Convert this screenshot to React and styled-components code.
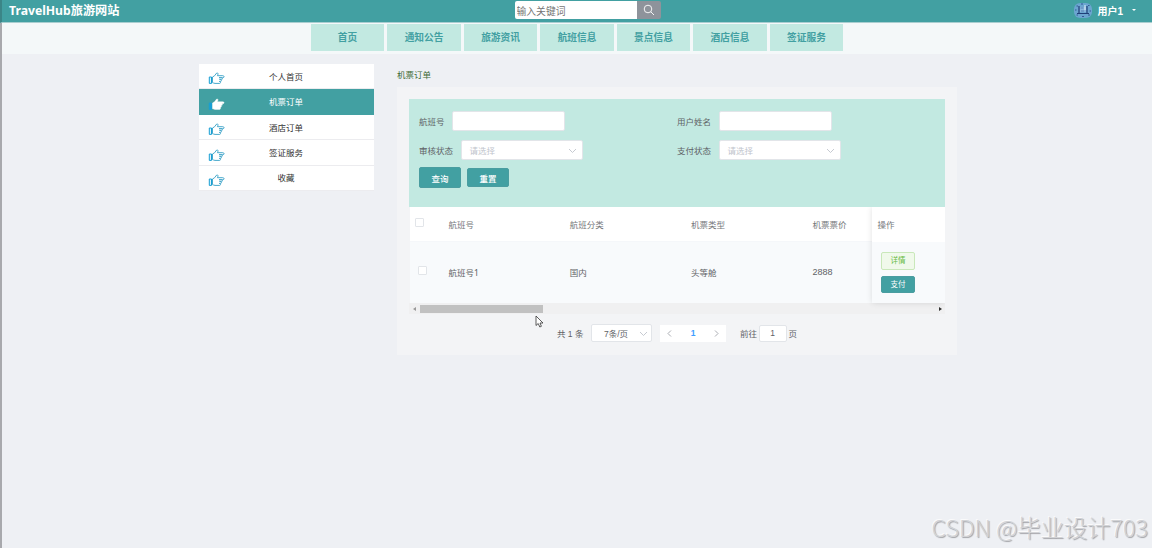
import React from 'react';
import styled, { createGlobalStyle } from 'styled-components';

const colors = {
  teal: '#42a0a2',
  mint: '#c2e9e1',
  page: '#eef0f4',
  text: '#606266',
  border: '#e2e5e9',
  placeholder: '#c0c4cc',
};

const GlobalStyle = createGlobalStyle`
  * {
    box-sizing: border-box;
  }

  body {
    margin: 0;
    height: 548px;
    overflow: hidden;
    background: ${colors.page};
    font-family: 'Noto Sans', 'Noto Sans CJK SC', sans-serif;
    font-size: 8.5px;
    color: ${colors.text};
  }

  button,
  input {
    font-family: inherit;
  }
`;

const Page = styled.div`
  height: 548px;
  border-left: 2px solid #a8a9ad;
`;

const Header = styled.header`
  display: flex;
  height: 23px;
  margin-left: -2px;
  padding-left: 9px;
  background: ${colors.teal};
  border-left: 2px solid #3b8587;
  border-bottom: 1px solid #a9ced0;
  color: #fff;
  font-weight: bold;
`;

const Brand = styled.div`
  width: 505.5px;
  margin-left: -2px;
  font-size: 12.2px;
  line-height: 22px;
`;

const Search = styled.form`
  display: flex;
  width: 146px;
  height: 18px;
  margin-top: 1px;
  overflow: hidden;
  border-radius: 2px;
`;

const SearchInput = styled.input`
  width: 122px;
  padding: 2px 2px 0;
  border: 0;
  background: #fff;
  font-size: 9.8px;

  &::placeholder {
    color: #757575;
  }
`;

const SearchButton = styled.button`
  width: 24px;
  padding: 0;
  border: 0;
  background: #8e939b;
  line-height: 0;
`;

const Account = styled.div`
  display: flex;
  align-items: center;
  gap: 5px;
  height: 20px;
  margin-left: auto;
  padding-right: 16px;
  font-family: 'Liberation Sans', 'Noto Sans CJK SC', sans-serif;
  font-size: 10px;
`;

const Caret = styled.i`
  margin-left: 4px;
  border: 2.5px solid transparent;
  border-top-color: #fff;
  border-bottom: 0;
`;

const Nav = styled.nav`
  display: flex;
  justify-content: center;
  gap: 3.4px;
  height: 31px;
  padding: 1px 0 3px;
  background: #f4f8f9;
`;

const NavItem = styled.a`
  width: 73.1px;
  background: ${colors.mint};
  color: ${colors.teal};
  font-size: 9.7px;
  font-weight: bold;
  line-height: 28px;
  text-align: center;
`;

const Main = styled.main`
  display: flex;
  gap: 23px;
  padding: 10px 0 0 197px;
`;

const Sidebar = styled.aside`
  width: 175px;
`;

const MenuItem = styled.a`
  display: flex;
  align-items: center;
  height: 25.45px;
  padding: 0 9px;
  background: ${({ $active }) => ($active ? colors.teal : '#fff')};
  border-bottom: 1px solid ${({ $active }) => ($active ? colors.teal : '#ececef')};
  color: ${({ $active }) => ($active ? '#fff' : '#333')};

  svg {
    margin-top: 5px;
  }

  span {
    flex: 1;
    padding: 0 18px 1px 0;
    text-align: center;
  }
`;

const Content = styled.section`
  width: 560px;
`;

const Title = styled.h1`
  height: 23px;
  margin: 0;
  color: #3c6a35;
  font-size: 8.5px;
  font-weight: normal;
  line-height: 22px;
`;

const Panel = styled.div`
  height: 268px;
  padding: 12px 12px 0;
  background: #f3f4f6;
`;

const Filters = styled.div`
  display: grid;
  grid-template-columns: 258px 1fr;
  grid-template-rows: 20px 20px 21px;
  row-gap: 9px;
  height: 108px;
  padding: 12px 10px;
  background: ${colors.mint};
`;

const Field = styled.label`
  display: flex;
  align-items: center;
  gap: 7.5px;
`;

const FieldName = styled.span`
  padding-bottom: 1px;
`;

const TextInput = styled.input`
  width: 113px;
  height: 20px;
  border: 1px solid ${colors.border};
  border-radius: 2px;
  background: #fff;
`;

const Select = styled.div`
  display: flex;
  align-items: center;
  justify-content: space-between;
  width: 122px;
  height: 20px;
  padding: 0 5px 0 8px;
  border: 1px solid ${colors.border};
  border-radius: 2px;
  background: #fff;
  color: ${colors.placeholder};
`;

const Actions = styled.div`
  display: flex;
  align-items: center;
  gap: 6px;
  margin-top: -4px;
`;

const Button = styled.button`
  width: 42px;
  height: ${({ $large }) => ($large ? '21px' : '19px')};
  padding: 0;
  border: 1px solid #4a9da0;
  border-radius: 2px;
  background: ${colors.teal};
  color: #fff;
  font-size: 8.5px;
  font-weight: 500;
`;

const Table = styled.div`
  display: flex;
  height: 96px;
  padding-left: 0.5px;
`;

const Columns = styled.div`
  width: 462px;
`;

const Row = styled.div`
  display: grid;
  grid-template-columns: 39px 121.3px 121.3px 121.3px 1fr;
  align-items: center;
  height: ${({ $head }) => ($head ? '34.5px' : '61.5px')};
  background: ${({ $head }) => ($head ? '#fff' : '#f8fafc')};
  border-bottom: ${({ $head }) => ($head ? '1px solid #f5f7fa' : '0')};
  color: ${({ $head }) => ($head ? '#75777b' : colors.text)};
`;

const Price = styled.span`
  font-family: 'Liberation Sans', sans-serif;
  font-size: 9px;
`;

const Checkbox = styled.i`
  width: 9px;
  height: 9px;
  margin: ${({ $head }) => ($head ? '-3px 0 0 5.5px' : '-4px 0 0 8.5px')};
  border: 1px solid ${colors.border};
  border-radius: 1px;
  background: #fff;
`;

const FixedColumn = styled.div`
  width: 73.5px;
  background: #f8fafc;
  box-shadow: 0 0 6px rgba(0, 0, 0, 0.12);
  clip-path: inset(0 0 -6px -8px);
  z-index: 1;
`;

const FixedHead = styled.div`
  height: 34.5px;
  padding: 1px 0 0 6px;
  background: #fff;
  color: #75777b;
  line-height: 34px;
`;

const FixedCell = styled.div`
  display: flex;
  flex-direction: column;
  gap: 6px;
  padding: 10.5px 0 0 9.5px;
`;

const SmallButton = styled.button`
  width: 34px;
  height: ${({ $success }) => ($success ? '18px' : '17px')};
  padding: 0;
  border: 1px solid ${({ $success }) => ($success ? '#c9e8ba' : '#4a9da0')};
  border-radius: 2px;
  background: ${({ $success }) => ($success ? '#f0f9eb' : colors.teal)};
  color: ${({ $success }) => ($success ? '#67b93f' : '#fff')};
  font-size: 7.5px;
  line-height: 1;
`;

const Scrollbar = styled.div`
  display: flex;
  align-items: center;
  height: 11px;
  padding: 0 3px 0 4px;
  background: #f0f0f1;
`;

const Arrow = styled.i`
  border: 2px solid transparent;
  border-width: 2px ${({ $right }) => ($right ? '0 2px 3px' : '3px 2px 0')};
  border-${({ $right }) => ($right ? 'left' : 'right')}-color: ${({ $right }) => ($right ? '#333' : '#999')};
`;

const Thumb = styled.div`
  width: 123px;
  height: 8px;
  margin: 0 auto 0 4px;
  background: #c1c1c1;
`;

const Pagination = styled.div`
  display: flex;
  align-items: center;
  height: 18px;
  margin-top: 10px;
  padding-left: 148px;
  font-family: 'Liberation Sans', 'Noto Sans CJK SC', sans-serif;
`;

const PageSize = styled.div`
  display: flex;
  align-items: center;
  justify-content: space-between;
  width: 61px;
  height: 18px;
  margin: 0 8px;
  padding: 0 3px 0 12px;
  border: 1px solid ${colors.border};
  border-radius: 2px;
  background: #fff;
`;

const Total = styled.span`
  width: 26px;
  white-space: nowrap;
`;

const Pager = styled.div`
  display: flex;
  align-items: center;
  justify-content: space-between;
  width: 66px;
  height: 17px;
  margin-right: 14px;
  padding: 0 5px;
  background: #fff;
  color: #409eff;
  font-weight: bold;
`;

const PageInput = styled.input`
  width: 28px;
  height: 17px;
  margin: 0 2px 0 1.5px;
  padding: 0;
  border: 1px solid ${colors.border};
  border-radius: 2px;
  color: ${colors.text};
  font-size: 8.5px;
  text-align: center;
`;

const Cursor = styled.svg`
  position: absolute;
  left: 535px;
  top: 315px;
`;

const Watermark = styled.div`
  position: absolute;
  right: 4px;
  bottom: 4px;
  color: #d2d3d6;
  font-family: 'Noto Sans CJK SC', sans-serif;
  font-size: 23.3px;
  font-weight: 300;
  line-height: 34px;
  text-shadow: 1px 1px 1px #a0a1a5, -1px -1px 0 #fafafb;
  white-space: nowrap;
`;

const Chevron = ({ d = 'M1 3l3.5 3.5L8 3', color = '#c0c4cc' }) => (
  <svg width="9" height="9" viewBox="0 0 9 9" fill="none" stroke={color} strokeWidth="0.9">
    <path d={d} />
  </svg>
);

const Hand = ({ active }) => (
  <svg width="17" height="13" viewBox="0 0 17 13" fill={active ? '#fff' : 'none'} stroke={active ? '#fff' : '#48a9cc'} strokeWidth={active ? 0.4 : 1}>
    <path d="M4.5 5l2-1.2L8.7 1c1.3-.5 1.7.9.7 2.7h5.4c1.7 0 1.7 2 0 2H11h2.6c1 0 1 1.9 0 1.9h-2.1 1.1c1 0 1 1.9 0 1.9h-1.3.6c.9 0 .8 1.9-.2 1.9H7c-1.2 0-1.6-.7-2.5-.7z" />
    <path d="M1.3 5h2.2v6.4H1.3z" fill={active ? '#189fd4' : '#dff2f8'} stroke="#189fd4" strokeWidth="1" />
  </svg>
);

const Avatar = () => (
  <svg width="18" height="15" viewBox="0 0 18 15">
    <rect width="18" height="15" rx="6" fill="#6ba5d0" />
    <path d="M2.5 3h1.5M14 2.5h1.5M1 7h1.5M15.5 8H17M2.5 12H4M7 1h2M14 12h2M8 13.5h2" stroke="#345b94" strokeWidth="1.2" />
    <path d="M5 3v7M13 3v7M3 10.5h12" fill="none" stroke="#203f78" strokeWidth="1.2" />
    <path d="M6 4h6v5H6z" fill="#88b5dc" />
    <path d="M6.5 5h3M7 8h3" stroke="#4674a9" strokeWidth="0.8" />
    <path d="M11 2v5" stroke="#e4f4fb" />
  </svg>
);

const navItems = ['首页', '通知公告', '旅游资讯', '航班信息', '景点信息', '酒店信息', '签证服务'];
const menuItems = ['个人首页', '机票订单', '酒店订单', '签证服务', '收藏'];

const App = () => {
  return (
    <Page>
      <GlobalStyle />
      <Header>
        <Brand>TravelHub旅游网站</Brand>
        <Search>
          <SearchInput placeholder="输入关键词" />
          <SearchButton type="button">
            <svg width="12" height="12" viewBox="0 0 12 12" fill="none" stroke="#fff" strokeWidth="0.9">
              <circle cx="5" cy="5" r="3.8" />
              <path d="M7.8 7.8L11 11" />
            </svg>
          </SearchButton>
        </Search>
        <Account>
          <Avatar />
          <span>用户1</span>
          <Caret />
        </Account>
      </Header>
      <Nav>
        {navItems.map((item) => (
          <NavItem key={item}>{item}</NavItem>
        ))}
      </Nav>
      <Main>
        <Sidebar>
          {menuItems.map((item) => (
            <MenuItem key={item} $active={item === '机票订单'}>
              <Hand active={item === '机票订单'} />
              <span>{item}</span>
            </MenuItem>
          ))}
        </Sidebar>
        <Content>
          <Title>机票订单</Title>
          <Panel>
            <Filters>
              <Field>
                <FieldName>航班号</FieldName>
                <TextInput />
              </Field>
              <Field>
                <FieldName>用户姓名</FieldName>
                <TextInput />
              </Field>
              <Field>
                <FieldName>审核状态</FieldName>
                <Select>请选择<Chevron /></Select>
              </Field>
              <Field>
                <FieldName>支付状态</FieldName>
                <Select>请选择<Chevron /></Select>
              </Field>
              <Actions>
                <Button $large>查询</Button>
                <Button>重置</Button>
              </Actions>
            </Filters>
            <Table>
              <Columns>
                <Row $head>
                  <Checkbox $head />
                  <span>航班号</span>
                  <span>航班分类</span>
                  <span>机票类型</span>
                  <span>机票票价</span>
                </Row>
                <Row>
                  <Checkbox />
                  <span>航班号1</span>
                  <span>国内</span>
                  <span>头等舱</span>
                  <Price>2888</Price>
                </Row>
              </Columns>
              <FixedColumn>
                <FixedHead>操作</FixedHead>
                <FixedCell>
                  <SmallButton $success>详情</SmallButton>
                  <SmallButton>支付</SmallButton>
                </FixedCell>
              </FixedColumn>
            </Table>
            <Scrollbar>
              <Arrow />
              <Thumb />
              <Arrow $right />
            </Scrollbar>
            <Pagination>
              <Total>共 1 条</Total>
              <PageSize>7条/页<Chevron /></PageSize>
              <Pager>
                <Chevron d="M6 1.5l-3 3 3 3" color="#a0a3a9" />
                <span>1</span>
                <Chevron d="M3 1.5l3 3-3 3" color="#a0a3a9" />
              </Pager>
              <span>前往</span>
              <PageInput defaultValue="1" />
              <span>页</span>
            </Pagination>
          </Panel>
        </Content>
      </Main>
      <Cursor width="9" height="13" viewBox="0 0 9 13" fill="#fff" stroke="#333" strokeWidth="0.8">
        <path d="M1 1v9.5l2.2-2L4.8 12l1.6-.7L5 8h3z" />
      </Cursor>
      <Watermark>CSDN @毕业设计703</Watermark>
    </Page>
  );
};

export default App;
